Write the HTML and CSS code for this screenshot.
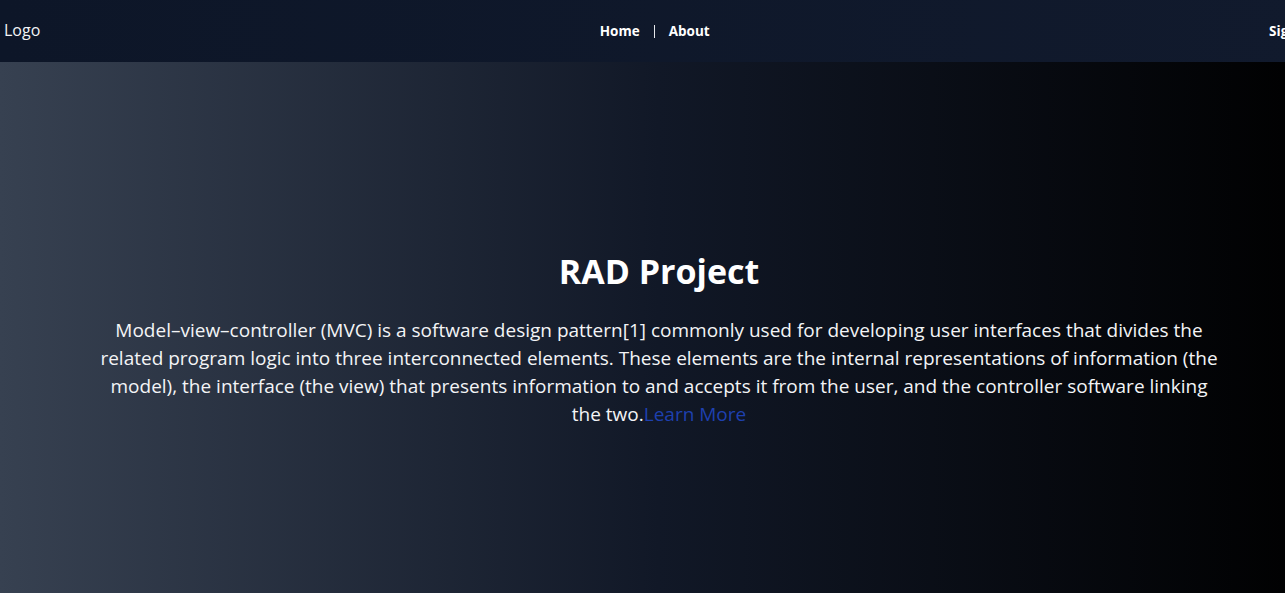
FILE: index.html
```html
<!DOCTYPE html>
<html lang="en">
<head>
<meta charset="utf-8">
<title>RAD Project</title>
<link rel="stylesheet" href="styles.css">
</head>
<body>
<div class="page">
  <header class="topbar">
    <div class="logo">Logo</div>
    <nav class="nav">
      <a class="nav-link" href="#">Home</a>
      <span class="nav-sep"></span>
      <a class="nav-link" href="#">About</a>
    </nav>
    <a class="signin" href="#">Sign In</a>
  </header>
  <main class="hero">
    <h1 class="hero-title">RAD Project</h1>
    <p class="hero-text">Model–view–controller (MVC) is a software design pattern[1] commonly used for developing user interfaces that divides the related program logic into three interconnected elements. These elements are the internal representations of information (the model), the interface (the view) that presents information to and accepts it from the user, and the controller software linking the two.<a class="learn" href="#">Learn More</a></p>
  </main>
</div>
</body>
</html>
```

FILE: styles.css
```css
* { box-sizing: border-box; }
html, body { margin: 0; padding: 0; }
body {
  background: #000;
  font-family: "Open Sans", "Noto Sans", sans-serif;
  color: #fff;
  overflow: hidden;
}
.page {
  width: 1318px;
  min-height: 593px;
  display: flex;
  flex-direction: column;
}
.topbar {
  height: 62px;
  display: flex;
  align-items: center;
  justify-content: space-between;
  padding: 0 4px;
  background: linear-gradient(90deg, #0d1628, #111a2d);
}
.logo {
  font-size: 16px;
  line-height: 20px;
  margin-top: -3px;
  color: #f3f4f6;
}
.nav {
  display: flex;
  align-items: center;
  gap: 14px;
}
.nav-link, .signin {
  color: #fff;
  text-decoration: none;
  font-weight: 700;
  font-size: 13.5px;
}
.nav-sep {
  width: 1px;
  height: 13px;
  background: #e5e7eb;
}
.hero {
  flex: 1;
  display: flex;
  flex-direction: column;
  align-items: center;
  padding: 187px 94px 0;
  background: linear-gradient(90deg, #374151 0%, #111827 50%, #000 100%);
}
.hero-title {
  margin: 0 0 23px;
  font-size: 34px;
  line-height: 44px;
  font-weight: 700;
}
.hero-text {
  margin: 0;
  text-align: center;
  font-size: 19px;
  line-height: 28px;
  color: #f3f4f6;
}
.learn {
  color: #1e40af;
  text-decoration: none;
}
```
